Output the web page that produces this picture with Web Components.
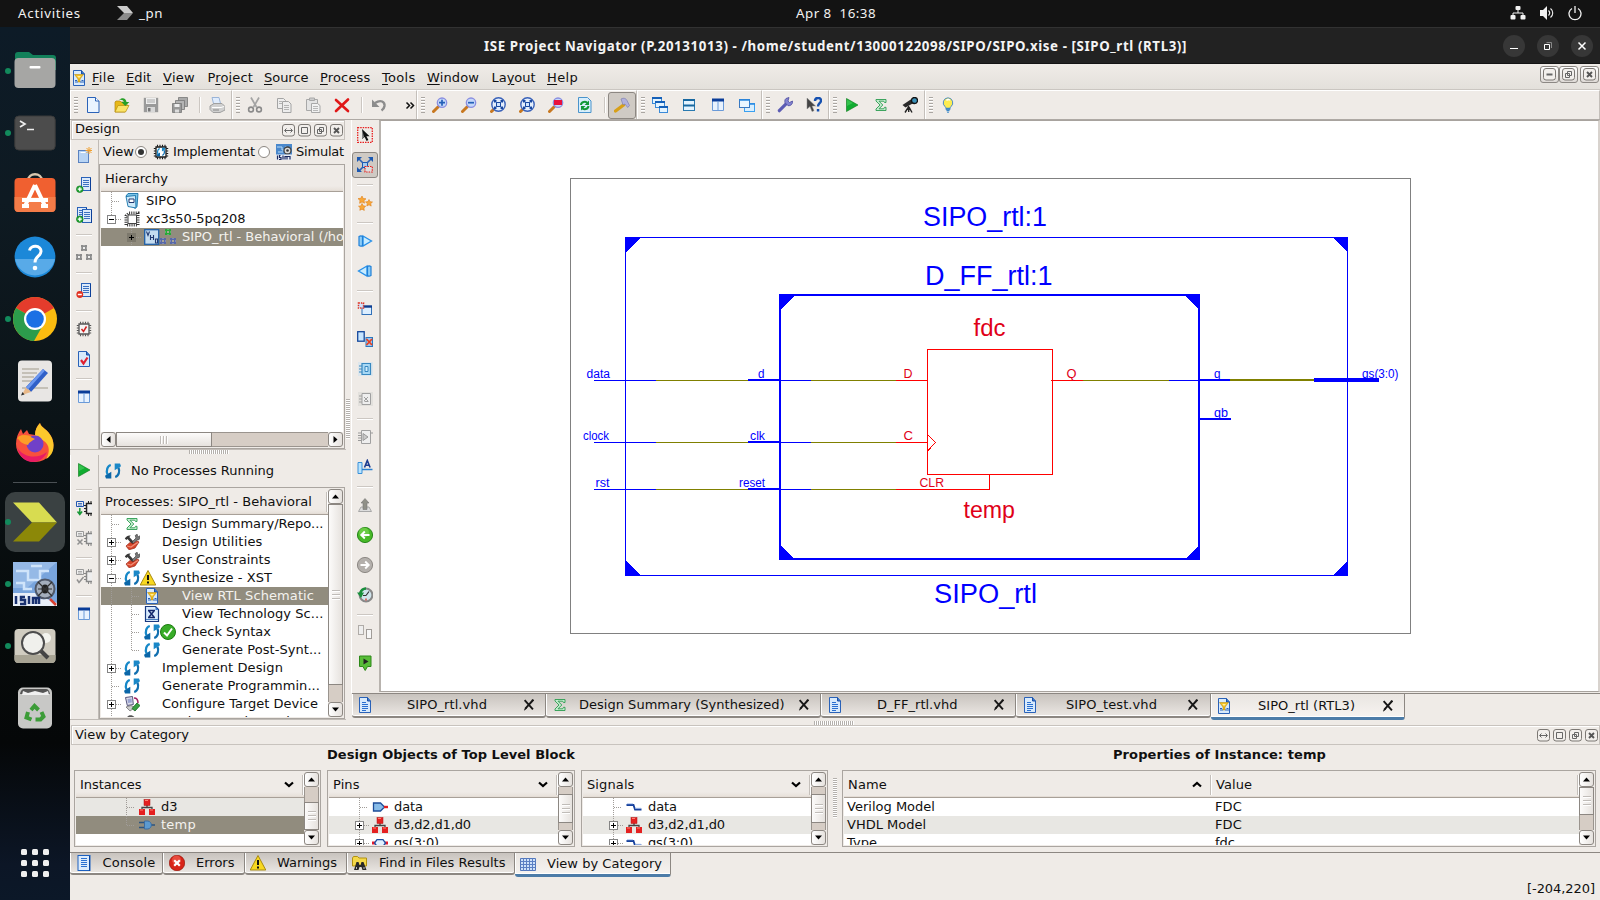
<!DOCTYPE html>
<html lang="en">
<head>
<meta charset="utf-8">
<title>ISE Project Navigator</title>
<style>
html,body{margin:0;padding:0;width:1600px;height:900px;overflow:hidden;background:#efebe7}
body{font:13px/18px "DejaVu Sans",sans-serif;color:#101010}
</style>
</head>
<body>
<ise-desktop></ise-desktop>
<script>
const fits = [];
function define(name, css, html) {
  customElements.define(name, class extends HTMLElement {
    connectedCallback() {
      if (this.shadowRoot) return;
      this.attachShadow({mode: 'open'});
      const body = typeof html === 'function' ? html(this) : html;
      this.shadowRoot.innerHTML = `<style>*{box-sizing:border-box}:host{display:block;box-sizing:border-box}${css}</style>${body}`;
    }
  });
}
const A = (el, n, d = '') => el.getAttribute(n) ?? d;

/* ---------- icon set, 16x16 ---------- */
const doc = (extra='') => `<path d="M2.500 .5h8l3 3.500v11.500h-11z" fill="#d8eafc" stroke="#2a62b8"/><path d="M10.500 .5v3.500h3" fill="#3b7ad0" stroke="#1b4fa5"/>${extra}`;
const lines = `<path d="M5 5.500h4M5 7.500h6M5 9.500h6M5 11.500h6M5 13.500h4" stroke="#2a6fd0"/>`;
const lens = (inner='') => `<path d="M1.500 14.500l4.500-4.500" stroke="#c87820" stroke-width="3" stroke-linecap="round"/><circle cx="10" cy="5.700" r="4.700" fill="#c4d8fa" stroke="#8a8ee0" stroke-width="1.300"/>${inner}`;
const lensX = `<path d="M1.500 14.500l3-3" stroke="#c87820" stroke-width="3" stroke-linecap="round"/><circle cx="8.500" cy="7.500" r="6.700" fill="#e4eefc" stroke="#3a62b8" stroke-width="1.400"/><path d="M5 4l7 7M12 4l-7 7" stroke="#1848a0" stroke-width="1.200"/><path d="M6.500 5.500h4v4h-4z" fill="#cfe4ff" stroke="#1848a0"/><path d="M4 3h3l-3 3zM13 3v3l-3-3zM4 12v-3l3 3zM13 12h-3l3-3z" fill="#1848a0"/>`;
const sync = `<path d="M5.800 2C2.400 2.800 .8 7.500 2.600 11.500" fill="none" stroke="#1788c8" stroke-width="2.300"/><path d="M0 12.800l6.300-4v6.700h-5.300z" fill="#0a66a8"/><path d="M10.200 14C13.600 13.200 15.200 8.500 13.400 4.500" fill="none" stroke="#1270b0" stroke-width="2.300"/><path d="M16 3.200l-6.300 4v-6.700h5.300z" fill="#1a88c8"/>`;
const chip = (c='#222', f='#f4f4f4', inner='') => `<path d="M3 3h10v10h-10z" fill="${f}" stroke="${c}" stroke-width="1.300"/><path d="M4.500 .8v2M7 .8v2M9.500 .8v2M12 .8v2M4.500 13.200v2M7 13.200v2M9.500 13.200v2M12 13.200v2M.8 4.500h2M.8 7h2M.8 9.500h2M.8 12h2M13.200 4.500h2M13.200 7h2M13.200 9.500h2M13.200 12h2" stroke="${c}" stroke-width="1.100"/>${inner}`;
const sm = (x,y,c,f) => `<rect x="${x+1}" y="${y+1}" width="4" height="4" fill="${f}" stroke="${c}" stroke-width="2"/><path d="M${x+.5} ${y+2.500}v1M${x+5.500} ${y+2.500}v1M${x+2.500} ${y+.5}h1M${x+2.500} ${y+5.500}h1" stroke="#fff" opacity=".45"/>`;
const hier = (a,b,f) => sm(5,0,a,f)+sm(0,9,b,f)+sm(10,9,b,f);
const tools = `<path d="M.8 4.500c1-2 3-3.500 6-3l-1.500 1.500 5.500 6-2 2-5.300-6-1.200 1z" fill="#383838"/><path d="M8 8l4-4-.8-2.500 2-1.300.3 2 2 .8.5-1.500.5 2.500-2 2-1.500 0-3.500 4z" fill="#787878" stroke="#333" stroke-width=".6"/><path d="M2 12l4-3.500 3 1.500 4-3 2 1-4 6-6 1.800z" fill="#d8452a" stroke="#9a2412" stroke-width=".7"/><path d="M3 12l4 1 3.500-2.500 3.500-2" fill="none" stroke="#f0907a" stroke-width="1.200"/>`;
const warn = `<path d="M8 .5l7.800 14.500h-15.600z" fill="#f8d820" stroke="#a88a10" stroke-linejoin="round"/><path d="M8 5v5M8 11.500v2" stroke="#111" stroke-width="2"/>`;
const greenTri = `<path d="M2.500 1.500l11.500 6.500-11.500 6.500z" fill="#10ac30" stroke="#087818" stroke-width=".6"/><path d="M3 2.500l6 3.500-6 3z" fill="#4cd060" opacity=".6"/>`;
const sigma = `<path d="M3 2.500h10v3h-1.500l-.8-1.300h-4.700l3.800 3.800-3.800 3.800h4.700l.8-1.500h1.500v3.200h-10v-1.500l4-4-4-4z" fill="#c5edd0" stroke="#2c9c50" stroke-width=".9"/>`;
const win = (x,y,w,h) => `<rect x="${x+.5}" y="${y+.5}" width="${w-1}" height="${h-1}" fill="#e4f4ff" stroke="#3a8ad8"/><path d="M${x} ${y+1}h${w}" stroke="#1560b8" stroke-width="2"/>`;
const columns = `<path d="M2.500 2.500h11v11h-11z" fill="#e8f2fe" stroke="#6a9ad8"/><path d="M2 3h12" stroke="#0a3c98" stroke-width="3"/><path d="M8 4v10" stroke="#6a9ad8"/>`;
const rtl = doc(`<path d="M3.500 4.500h9l-3.500 4.500v3h-2v-3z" fill="#f4c020" stroke="#b08000" stroke-width=".5"/><path d="M6 6h4l-2 2z" fill="#fff0a0"/><path d="M4 12h3M9 12h4M4 10.500h2M10.500 10.500h2" stroke="#2a62b8" stroke-width="1.200"/>`);
const plus = `<circle cx="3.800" cy="12.200" r="3.300" fill="#28a838" stroke="#0c7a1c" stroke-width=".7"/><path d="M1.800 12.200h4M3.800 10.200v4" stroke="#fff" stroke-width="1.300"/>`;
const bluedoc = (x=5,y=0) => `<rect x="${x+.5}" y="${y+.5}" width="9" height="13" fill="#dceafa" stroke="#2a62b8"/><path d="M${x+2} ${y+3.500}h6M${x+2} ${y+5.500}h6M${x+2} ${y+7.500}h6M${x+2} ${y+9.500}h6" stroke="#3a70c0"/><path d="M${x+9.500} ${y+1}v13" stroke="#0c3f98"/>`;
const redHier = `<path d="M8 5v4M3 11v-2.500h10v2.500" fill="none" stroke="#444" stroke-width="1.300"/><rect x="5" y=".5" width="6" height="6" fill="#e42020" stroke="#b01010" stroke-width=".5"/><rect x="0" y="10" width="6" height="6" fill="#e42020"/><rect x="10" y="10" width="6" height="6" fill="#e42020"/><path d="M6 1.500h3M1 11h3M11 11h3" stroke="#ff8070"/>`;
const chipproc = (c,b,x) => `<path d="M.5 1.500h7v5h-7z" fill="#eee" stroke="${b}"/><path d="M2 3.500h4M2 5h4" stroke="${b}" stroke-width=".8"/><path d="M16 3.500h-5.500v10h5.500" fill="#eee" stroke="${c}" stroke-width="1.500"/><path d="M8 5.500h2M8 8.500h2M8 11.500h2M12.500 1v2M15 1v2M12.500 14v2M15 14v2" stroke="${c}"/>${x}`;
const ICONS = {
  newdoc: `<path d="M2.500 .5h8l3.500 3.500v11.500h-11.500z" fill="#eaf4ff" stroke="#2a62b8"/><path d="M10.500 .5v3.500h3.500" fill="#fff" stroke="#2a62b8"/>`,
  open: `<path d="M1 5l1-1h4l1 1h4v3h3l-3 7h-10z" fill="#e8b818" stroke="#b08410" stroke-width=".7"/><path d="M1 15l3-6.500h11l-3.500 6.500z" fill="#fbe468" stroke="#b89010" stroke-width=".7"/><path d="M5 3c3-3 7-2 7.500 2h2.800l-4 4-4-4h2.600c-.6-2-2.500-2.600-4.900-2z" fill="#28a028"/>`,
  save: `<path d="M.8 .8h14.400v14.400h-14.400z" fill="#9a9a9a"/><path d="M3 1h10v6h-10z" fill="#eee"/><path d="M4 3h8M4 5h8" stroke="#aaa"/><path d="M4 10h8v5.200h-8z" fill="#d8d8d8"/><path d="M5 11h2.500v3.500h-2.500z" fill="#777"/>`,
  saveall: `<g stroke="#777" stroke-width=".8"><path d="M6.500 .5h9v9h-9z" fill="#aaa"/><path d="M3.500 3.500h9v9h-9z" fill="#b4b4b4"/><path d="M.5 6.500h9v9h-9z" fill="#999"/></g><path d="M2.500 7h5v3h-5z" fill="#eee"/><path d="M3 12.500h4v3h-4z" fill="#ddd"/>`,
  print: `<path d="M3 .5l7 0 2 8h-7z" fill="#e0ecfc" stroke="#9ab4d8"/><path d="M1 9l4-2.500h8l3 3v3.500l-5 2.500h-7l-3-3z" fill="#d0d0d0" stroke="#a0a0a0"/><path d="M3 10.500h9l3-1" stroke="#fff" fill="none"/><path d="M4 13h6" stroke="#888"/>`,
  cut: `<path d="M4 .5l5.500 9.500M12 .5l-5.500 9.500" stroke="#a4a4a4" stroke-width="1.700"/><circle cx="4" cy="12.500" r="2.400" fill="none" stroke="#8a8a8a" stroke-width="1.600"/><circle cx="12" cy="12.500" r="2.400" fill="none" stroke="#8a8a8a" stroke-width="1.600"/>`,
  copy: `<g fill="#ededed" stroke="#a4a4a4"><path d="M1.500 1.500h6l2 2v8h-8z"/><path d="M6.500 4.500h6l2.500 2.500v8.500h-8.500z"/></g><path d="M3 4.500h3M3 6.500h3M8 8.500h5M8 10.500h5M8 12.500h5" stroke="#b4b4b4"/>`,
  paste: `<g fill="#e4e4e4" stroke="#a8a8a8"><path d="M1.500 2.500h11v11h-11z"/><path d="M4.500 1h5v2.500h-5z" fill="#ccc"/><path d="M6.500 6.500h6l2.500 2v7h-8.500z" fill="#f2f2f2"/></g><path d="M8 9.500h5M8 11.500h5M8 13.500h5" stroke="#b8b8b8"/>`,
  del: `<path d="M2 3l12 11M14 2.500l-12 11.500" stroke="#e01818" stroke-width="2.600" stroke-linecap="round"/>`,
  undo: `<path d="M4 6c6-4 10-1 9.500 3-.3 2-1.500 3.500-3 4.500" fill="none" stroke="#8c8c8c" stroke-width="2.400"/><path d="M1 2.500v7.500h7.500z" fill="#8c8c8c"/>`,
  more: `<path d="M5.500 5.500l3 3-3 3M9.500 5.500l3 3-3 3" fill="none" stroke="#111" stroke-width="1.500"/>`,
  zin: lens('<path d="M7 5.700h6M10 2.700v6" stroke="#2460b8" stroke-width="1.700"/>'),
  zout: lens('<path d="M7 5.700h6" stroke="#2460b8" stroke-width="1.700"/>'),
  zfit: lensX, zsel: lensX,
  zbox: lens('<rect x="6" y="3" width="8" height="5" fill="#e8103c"/>'),
  refresh: `<path d="M1.500 .5h9l3.500 3.500v11.500h-12.500z" fill="#d8eefc" stroke="#4a94cc"/><path d="M4 8c0-3.500 5-4 6.500-2M11.500 9c-.5 3.500-5 4-6.500 2" fill="none" stroke="#109838" stroke-width="2"/><path d="M12 3.500v4.500h-4.500zM4 13.500v-4.500h4.500z" fill="#109838"/>`,
  hammer: `<path d="M1.500 14l8-6" stroke="#d8a018" stroke-width="3.400" stroke-linecap="round"/><path d="M7 2c3-1.500 5-.5 6 1.500l2.500 5-1.800 2-2.700-3.500-2 .8z" fill="#b0b0dc" stroke="#8080b0" stroke-width=".7"/>`,
  cascade: win(0,0,10,7)+win(3,4,10,7)+win(7,9,9,7),
  tileh: `<rect x="2.500" y="2.500" width="11" height="11" fill="#e4f4ff" stroke="#2a7ab0"/><path d="M2 3h12M2 8.500h12" stroke="#1868a0" stroke-width="1.800"/>`,
  tilev: columns,
  winback: `<rect x="5.500" y="6.500" width="10" height="8" fill="#d8eefe" stroke="#3aa0f0"/><rect x=".5" y="2.500" width="10" height="8" fill="#eaf6ff" stroke="#3a78c0"/><path d="M0 3h11M10 7h6" stroke="#2888e0" stroke-width="1.500"/>`,
  wrench: `<path d="M2.300 13.700l7-7" stroke="#5c5cb4" stroke-width="3.200" stroke-linecap="round"/><path d="M9 1.500l3-1-1 3.500 1.500 1.500 3-1.500c.4 3.500-2 5-4.500 4.700l-3-3c-.5-2 0-3.500 1-4.200z" fill="#8484d0" stroke="#4c4ca0" stroke-width=".8"/>`,
  help: `<path d="M1 1v11l3-2.500 2 5 2-.8-2-4.700h3.500z" fill="#444" stroke="#888" stroke-width=".5"/><path d="M9 4c0-4 6-4 6-.5 0 2.800-3 2.700-3 6" fill="none" stroke="#1550b0" stroke-width="2.400"/><path d="M10.800 12h2.500v2.500h-2.500z" fill="#1550b0"/>`,
  play: greenTri, sigma,
  scope: `<path d="M.5 8l3 2.500 8-4.500-2-4z" fill="#2a2a2a"/><circle cx="12.500" cy="3.500" r="3" fill="#3a90b8" stroke="#111" stroke-width="1.300"/><path d="M6.500 9v3M6.500 10l-3.500 5.500M7 10l3 5.500M6.700 11v4" stroke="#222" stroke-width="1.400"/>`,
  bulb: `<path d="M8 .8a5 5 0 0 0-3 8.800c1 1 1 2 1 3h4c0-1 0-2 1-3a5 5 0 0 0-3-8.800z" fill="#fcec50" stroke="#4a8cc8"/><path d="M6.500 3.500c1-1.500 3-1 3 0" stroke="#fff" fill="none" stroke-width="1.500"/><path d="M6 11.500h4M6.500 13.500h3M7.300 15.300h1.400" stroke="#3a88c8" stroke-width="1.300"/>`,
  rtl, doc: doc(lines),
  cursor: `<rect x=".7" y=".7" width="14.600" height="14.600" fill="none" stroke="#e82020" stroke-width="1.300" stroke-dasharray="1.500 1"/><path d="M5 2v10l2.600-2 2 4 1.800-1-2-3.800h3.200z" fill="#111"/><path d="M5 2v10l2-2z" fill="#888"/>`,
  net: `<path d="M2 2l12 12M14 2l-12 12" stroke="#2a62b8" stroke-width="1.600"/><path d="M0 0h5l-5 5zM16 0v5l-5-5zM0 15v-5l5 5z" fill="#1c58b0"/><path d="M5.500 5.500h5v5h-5z" fill="#a4ccf0" stroke="#1c58b0"/><rect x="8" y="9.500" width="7.300" height="5.500" fill="#ddd" stroke="#e82020" stroke-width="1.200" stroke-dasharray="1.500 1"/>`,
  stars: `<path d="M5 1l1.200 2.500 2.800.3-2 1.800.5 2.600-2.500-1.200-2.400 1.300.4-2.800-2-1.900 2.800-.3zM12 4.500l1 2.200 2.500.3-1.800 1.600.5 2.500-2.200-1.300-2.200 1.200.5-2.400-1.800-1.700 2.500-.3zM5 8.500l1.200 2.300 2.500.4-1.800 1.700.4 2.500-2.300-1.200-2.200 1.100.4-2.500-1.700-1.600 2.400-.3z" fill="#f8a838" stroke="#e08018" stroke-width=".6"/>`,
  tright: `<path d="M6 3l8.500 5-8.500 5z" fill="#c8ecff" stroke="#2890e8" stroke-width="1.300"/><path d="M2 3.500c1.500-1 2.500-1 3.500 0v9c-1 1-2 1-3.500 0z" fill="#8ccdf8" stroke="#2080d8" stroke-width="1.200"/>`,
  tleft: `<path d="M10 3l-8.500 5 8.500 5z" fill="#c8ecff" stroke="#2890e8" stroke-width="1.300"/><path d="M14 3.500c-1.500-1-2.500-1-3.500 0v9c1 1 2 1 3.500 0z" fill="#8ccdf8" stroke="#2080d8" stroke-width="1.200"/>`,
  popwin: `<rect x="5" y="5.500" width="9.500" height="8" fill="#dceeff" stroke="#3070b8"/><path d="M4.500 5.500h10.500" stroke="#0c3c90" stroke-width="2.400"/><rect x="1.500" y="2" width="5" height="5" fill="#cfe4ff" stroke="#e03020" stroke-width="1.500" stroke-dasharray="1.400 1"/>`,
  delbox: `<rect x=".7" y=".7" width="6.500" height="9.500" fill="#c8e6ff" stroke="#14489c" stroke-width="1.300"/><rect x="9" y="6.500" width="6.500" height="9" fill="#a0c8f0" stroke="#2a78c0"/><path d="M9.500 8l5.500 6M15 8l-5.500 6" stroke="#e84020" stroke-width="1.800"/>`,
  chipb: `<rect x="1" y="1" width="15" height="14" fill="#dde6ec"/><path d="M5 2.500h8.500v11h-8.500z" fill="#a8d8f4" stroke="#3888c0" stroke-width="1.200"/><path d="M8 5.500h3v5h-3z" fill="#d0ecfc" stroke="#3888c0"/><path d="M2 5h3M2 8h3M2 11h3" stroke="#3888c0"/>`,
  chipg: `<rect x="1" y="1" width="15" height="14" fill="#e2e0dc"/><path d="M5 2.500h8.500v11h-8.500z" fill="#eee" stroke="#a0a0a0"/><path d="M7 6l4 4M11 6l-4 4M7.500 10.500h4" stroke="#a0a0a0"/><path d="M2 5h3M2 8h3M2 11h3" stroke="#a0a0a0"/>`,
  gateg: `<path d="M4.500 1.500h9v13h-9z" fill="#eee" stroke="#a0a0a0"/><path d="M6 4.500l5 3.500-5 3.500z" fill="#c8c8c8" stroke="#999"/><path d="M1 4h3.500M1 6.500h3.500M1 9h3.500M1 11.500h3.500M13.500 4h2.500" stroke="#999"/>`,
  label: `<path d="M1 3.500h4v11h-4z" fill="#b8e4ff" stroke="#3a90d8"/><path d="M5 10.500h10.500" stroke="#2a80d0" stroke-width="1.500"/><path d="M7.500 8.500l2.800-7 2.800 7M8.500 6.200h3.600" fill="none" stroke="#1c3c90" stroke-width="1.600"/>`,
  up: `<path d="M4 10l-2.500 4.500h13l-2.500-4.500z" fill="#ddd" stroke="#a8a8a8"/><path d="M8 1.500l4 4.500h-2v6.500h-4v-6.500h-2z" fill="#909088" stroke="#777" stroke-width=".6"/>`,
  back: `<circle cx="8" cy="8" r="7.600" fill="#48b828" stroke="#1c8010" stroke-width=".9"/><circle cx="7" cy="5.500" r="5" fill="#8ce060" opacity=".5"/><path d="M12.500 8h-8M7.800 4.500l-3.500 3.500 3.500 3.500" fill="none" stroke="#fff" stroke-width="1.900"/>`,
  fwd: `<circle cx="8" cy="8" r="7.600" fill="#b4b0ac" stroke="#84807c" stroke-width=".9"/><path d="M3.500 8h8M8.200 4.500l3.500 3.500-3.500 3.500" fill="none" stroke="#fff" stroke-width="1.900"/>`,
  clock: `<circle cx="9" cy="8" r="6.400" fill="#d0e4ec" stroke="#888" stroke-width="2"/><path d="M9 8.500l3-4M9 8.500h-3" stroke="#333" stroke-width="1.200"/><path d="M0 5.500l7 0-3 5.500z" fill="#18903c"/><path d="M3.500 7c0-4 3-5.500 5.500-5.500" fill="none" stroke="#18903c" stroke-width="2.600"/><path d="M9 11.500v2" stroke="#e04030" stroke-width="1.400"/>`,
  cols: `<rect x="1.500" y=".5" width="5" height="9" fill="#eee" stroke="#b0aca8"/><rect x="9.500" y="4.500" width="5" height="9" fill="#f6f6f6" stroke="#a09c98"/>`,
  marker: `<path d="M2.500 1h11.500v10.500h-3.500l-2.300 4-2.300-4h-3.400z" fill="#58bc38" stroke="#2c8818"/><path d="M6.500 3.500l5 3-5 3z" fill="#222"/>`,
  newsrc: `<rect x="2.500" y="3.500" width="10" height="12" fill="#b8d4f4" stroke="#5a82c0"/><path d="M4.500 5.500h5" stroke="#fff"/><path d="M13 0v7M9.500 3.500h6.500M10.500 1l5 5M15.500 1l-5 5" stroke="#f0a030" stroke-width="1"/>`,
  addsrc: bluedoc(5,0)+plus, addcopy: bluedoc(1,0)+bluedoc(6,2)+plus,
  remsrc: bluedoc(5,0)+`<circle cx="3.800" cy="11.500" r="3.400" fill="#e03020"/><path d="M1.800 11.500h4" stroke="#fff" stroke-width="1.500"/>`,
  hierg: hier('#8c8c8c','#8c8c8c','#eee'), hierc: hier('#28a838','#5868a8','#a8a498'),
  chipchk: chip('#555','#f4f4f4','<path d="M5.500 8l2 2.500 3-5" stroke="#d02020" stroke-width="1.500" fill="none"/>'),
  docchk: doc('<path d="M5 9l2.500 3.500 4-6" stroke="#e02030" stroke-width="2.200" fill="none"/>'),
  columns,
  chipsync: chip('#181818','#fff',`<g transform="translate(3.500 3.500) scale(.56)">${sync}</g>`),
  isim: `<rect width="16" height="16" fill="#4a88cc"/><path d="M1 3h5v3h4v-4M2 8h5" stroke="#b8dcf8" fill="none"/><circle cx="11.500" cy="6.500" r="3.500" fill="#ddd" stroke="#444" stroke-width="1.300"/><circle cx="11.500" cy="6.500" r="1.300" fill="#333"/><path d="M0 10.500h16v5.500h-16z" fill="#e8ecf4"/><path d="M1.500 11.500v4M4.500 11.500h-1v2h1.500v2h-2M7 11.500v4M9 15.500v-3h2v3M11 12.500h3v3" stroke="#182860" stroke-width="1.200" fill="none"/>`,
  proj: `<path d="M2 3l2-2.500h10l-1 13-2 2z" fill="#7cc4e8" stroke="#1470a8" stroke-width=".9"/><path d="M2 3.500l9.500-1 .5 12.500-8-1.500z" fill="#cdeafa" stroke="#1470a8" stroke-width=".9"/><path d="M5 6h5v3.500h-5z" fill="#fff" stroke="#203870"/>`,
  chip: `<path d="M3.500 3.500l1.500-1.500h9v12h-12v-9z" fill="#fff" stroke="#333" stroke-width="3" stroke-dasharray="1 1.200"/><path d="M4 4h8.500v8.500h-8.500z" fill="#fff" stroke="#444"/>`,
  vhd: `<rect x=".7" y=".7" width="14" height="14.600" fill="#c4dcf0" stroke="#2060a8" stroke-width="1.300"/><path d="M2.500 2.500l1.500 4 1.500-4M6.500 6v5M9.500 6v5M6.500 8.500h3M11.500 10v4h2v-4z" fill="none" stroke="#203870" stroke-width="1.100"/>`,
  sync, tools, warn,
  tech: `<path d="M1.500 .5h10l3 3v12h-13z" fill="#d8eafc" stroke="#1a3a80" stroke-width="1.200"/><path d="M11.500 .5v3.500h3" fill="#3b7ad0"/><path d="M4 4.500h7M4 11.500h7M5 5l5 6M10 5l-5 6" stroke="#14286c" stroke-width="1.500"/><path d="M2 13.500h12" stroke="#4a80c0"/>`,
  ok: `<circle cx="8" cy="8" r="7.500" fill="#38ac28" stroke="#1c7c10"/><path d="M4 8.500l3 3 5-7" fill="none" stroke="#fff" stroke-width="2"/>`,
  device: `<path d="M1.500 1.500l7-1 .8 8-6 1z" fill="#dcdcec" stroke="#55557c"/><path d="M3.500 3l4-.5.4 4-4 .5z" fill="#9aa4d0"/><path d="M10 2c3 0 4 2 4 5" stroke="#a02060" fill="none" stroke-width="1.500"/><path d="M2 11l5-1.500 4 2-5 3.500z" fill="#ccc" stroke="#666" stroke-width=".7"/><path d="M8 12.500l5-5.500 3 2.500-5 5.500z" fill="#38a040" stroke="#146420" stroke-width=".8"/>`,
  analyze: `<path d="M3 4c0-3 6-4 8 0v8h-8z" fill="#555"/>`,
  run1: chipproc('#222','#2458b0','<path d="M3.800 8v6M1.500 11.500l2.300 3 2.300-3" stroke="#189838" stroke-width="1.500" fill="none"/>'),
  run2: chipproc('#888','#999','<path d="M1.500 9.500l5 5M6.500 9.500l-5 5" stroke="#909090" stroke-width="1.500"/>'),
  run3: chipproc('#888','#999','<path d="M1 11.500l2 3 4.500-5.500" stroke="#909090" stroke-width="1.500" fill="none"/>'),
  redhier: redHier,
  gate: `<path d="M0 5.500h6M0 10.500h6M12 8h4" stroke="#2c5480" stroke-width="1.500"/><path d="M5.500 4h3.500c4.500 1 4.500 7 0 8h-3.500z" fill="#5c9ad0" stroke="#3c6ca0"/>`,
  pin: `<path d="M1.500 4h7l4 4-4 4h-7z" fill="#88bce8" stroke="#1c4c98" stroke-width="1.300"/><path d="M12 8h4" stroke="#e02020" stroke-width="2.400"/>`,
  bus: `<path d="M0 8h16" stroke="#e81828" stroke-width="3"/><path d="M5 4.700h6l2.500 3.300-2.500 3.300h-6l-2.500-3.300z" fill="#e0f0ff" stroke="#1c4ca0" stroke-width="1.300"/>`,
  sig: `<path d="M.5 6h7l1.500 4.500h6.500" fill="none" stroke="#16409c" stroke-width="1.800"/><path d="M1 4.800h6M9 9.300h6" stroke="#90b0e8" stroke-width=".8"/>`,
  console: `<rect x="2" y=".5" width="12" height="15" fill="#dcecfc" stroke="#1c60c0"/><path d="M13.500 1v15" stroke="#0c48a0"/><path d="M5 3.500h6M5 5.500h6M5 7.500h6M5 9.500h6M5 11.500h6" stroke="#2a70d0"/>`,
  err: `<circle cx="8" cy="8" r="7.700" fill="#d82418" stroke="#981408" stroke-width=".7"/><circle cx="7.500" cy="5" r="4.500" fill="#f87060" opacity=".5"/><path d="M5.200 5.200l5.600 5.600M10.800 5.200l-5.600 5.600" stroke="#fff" stroke-width="2.200"/>`,
  find: `<path d="M.5 3l1-1.500h4l1.500 1.500h7.500v8h-14z" fill="#f4d848" stroke="#b09010"/><path d="M2 15l2.500-8h2l1 3h1l1-3h2l3 8h-4l-1-3h-2l-1 3z" fill="#282828"/><path d="M4.500 12v2M12 12v2" stroke="#bbb"/>`,
  grid: `<path d="M.5 2.500h15v12h-15z" fill="#cfe2fa" stroke="#5478bc"/><path d="M.5 5.500h15M.5 8.500h15M.5 11.500h15M3.500 2.500v12M6.500 2.500v12M9.500 2.500v12M12.500 2.500v12" stroke="#5c80c4"/>`,
  close: `<path d="M3 2.500l9.500 10.500M13 2l-9.500 10.500" stroke="#161616" stroke-width="2.200"/><path d="M2.500 14l3-3M11 2.500h2.500" stroke="#161616" stroke-width="1.200"/>`,
};
define('ise-icon', `:host{width:16px;height:16px;flex:none}svg{display:block;width:100%;height:100%}`,
  el => `<svg viewBox="0 0 16 16">${ICONS[A(el,'n')] || ''}</svg>`);

/* text whose tracking is tuned so the run takes a given width */
customElements.define('fit-text', class extends HTMLElement {
  connectedCallback() {
    if (!this.shadowRoot) {
      this.attachShadow({mode:'open'}).innerHTML = `<style>:host{display:block;white-space:pre;flex:none}span{display:inline-block}</style><span><slot></slot></span>`;
      fits.push(this);
    }
  }
  fit() {
    const w = +this.getAttribute('w'), s = this.shadowRoot.querySelector('span');
    if (!w) return;
    const n = this.textContent.length;
    s.style.letterSpacing = ((w + 1 - s.getBoundingClientRect().width) / n).toFixed(3) + 'px';
  }
});
const T = (t, w) => `<fit-text w="${w}">${t}</fit-text>`;

/* ---------- GNOME shell ---------- */
define('shell-bar', `:host{height:27px;background:#131313;color:#f2f2f2;font:14px/27px "Noto Sans",sans-serif;position:relative}
 .row{display:grid;grid-template-columns:796px 80px 1fr;height:27px}.l{display:flex;padding-left:18px}.l svg{margin:5px 6px 0 36px}
 .r{display:flex;justify-content:flex-end;padding-right:18px;gap:13px;align-items:center;padding-bottom:1px}fit-text{font-size:13.300px}`,
 `<div class="row"><div class="l">${T('Activities',62)}<svg width="16" height="16"><path d="M0 1h10l6 7h-9z" fill="#ccc"/><path d="M7 8h9l-6 7h-10z" fill="#8c8c8c"/></svg>${T('_pn',23)}</div>
 ${T('Apr 8  16:38',79)}
 <div class="r"><svg width="16" height="16" fill="#f2f2f2"><rect x="5.500" y="1" width="5" height="4" rx="1"/><rect x=".5" y="10" width="5" height="4.500" rx="1"/><rect x="10.500" y="10" width="5" height="4.500" rx="1"/><path d="M8 5v3M3 10v-2h10v2" fill="none" stroke="#f2f2f2"/></svg>
 <svg width="16" height="16"><path d="M1 5h3l4-4v14l-4-4h-3z" fill="#f2f2f2"/><path d="M9.500 5.500c1.500 1.500 1.500 3.500 0 5M11.500 3.500c3 2.500 3 6.500 0 9" fill="none" stroke="#f2f2f2" stroke-width="1.100"/></svg>
 <svg width="14" height="16"><path d="M4 3.500a6 6 0 1 0 6 0M7 1v7" fill="none" stroke="#f2f2f2" stroke-width="1.300"/></svg></div></div>`);

const DOCK = {
 files:`<path d="M1 5q0-3 3-3h11l4 3h20q3 0 3 3v12h-41z" fill="#12805a"/><rect x=".5" y="8" width="41" height="30" rx="4" fill="#a6a6a4"/><rect x="15.500" y="16" width="11" height="2.500" rx="1" fill="#fff"/>`,
 term:`<rect x=".8" y="4" width="40.400" height="34" rx="4" fill="#4c4c4c" stroke="#3a3a3a"/><path d="M6 9l5 3-5 3" fill="none" stroke="#eee" stroke-width="1.700"/><path d="M13 17.500h7" stroke="#eee" stroke-width="1.500"/>`,
 soft:`<path d="M14 7c0-9 14-9 14 0" fill="none" stroke="#d8c8b0" stroke-width="2.400"/><rect x=".5" y="4" width="41" height="34" rx="4" fill="#f06030"/><path d="M.5 23h41v11q0 4-4 4h-33q-4 0-4-4z" fill="#f47c48"/><path d="M21 11L11 32M21 11l10 21M8 26h26M8 32h7M27 32h7" stroke="#fff" stroke-width="4" fill="none"/>`,
 help:`<circle cx="21" cy="21" r="20.400" fill="#1c88d8"/><path d="M1 23a20.400 20.400 0 0 0 40 0z" fill="#58aae8"/><path d="M15.500 14.500c1-6 12-5.500 11.500 1-.4 5-6 4.500-6 11" fill="none" stroke="#fff" stroke-width="3"/><circle cx="21" cy="32" r="2.300" fill="#fff"/>`,
 chrome:`<circle cx="21" cy="21" r="22" fill="#fbbc10"/><path d="M21 21L2 10a22 22 0 0 1 38 0z" fill="#e43c2c"/><path d="M2 10a22 22 0 0 0 18 33l9-16-8-6z" fill="#2c9c4c"/><circle cx="21" cy="21" r="11" fill="#fff"/><circle cx="21" cy="21" r="8.800" fill="#1c70e4"/>`,
 edit:`<rect x="4" y=".5" width="34" height="41" rx="4" fill="#e8e6e4"/><path d="M8 9h17M8 13h15M8 17h12M8 21h10M8 28h26" stroke="#b8b4a8" stroke-width="1.300"/><path d="M29 9l5 4-17 19-5-5z" fill="#3060c8"/><path d="M12 27l5 5-9 3z" fill="#e8b888"/><path d="M8.500 32l2 2.500-3.500 1z" fill="#333"/><path d="M29 9l2 1.500-17 19-2-2z" fill="#6c98f0"/>`,
 fox:`<path d="M21 40c-11 0-19-8-19-18 0-6 2-11 5-15l2 5 4-4 2 4 6 1c0-5 2-9 5-12 1 5 8 6 12 15 5 12-4 24-17 24z" fill="#f8503c"/><path d="M26 1c1 5 8 6 12 15 4 10 0 18-6 21 4-6 4-14-2-18-4-3-8-4-9-6 0-5 2-9 5-12z" fill="#fcc82c"/><path d="M3 17c3-6 12-4 18-2l6 2-10 3z" fill="#f89820"/><circle cx="21" cy="22" r="8.500" fill="#7040c8"/><path d="M4 15c6-4 12 0 17 2-3 2-6 3-7 6-5-1-9-3-10-8z" fill="#fc9c28"/><path d="M3 25c5 10 20 13 30 5-3 7-9 10-14 10-8 0-14-6-16-15z" fill="#e81c64"/>`,
 ise:`<path d="M-1 1.500h26l18 20h-25z" fill="#d8dc50"/><path d="M18 21.500h25l-18 19h-26z" fill="#8c8808"/>`,
 isim:`<rect x="-1" y="-1" width="44" height="44" fill="#78a4dc"/><path d="M-1-1h44l-30 26h-14z" fill="#a8c8ec" opacity=".6"/><path d="M2 8h12v9h12v-9h9M2 20h8v6h8M17 3h11" fill="none" stroke="#d0e4fa" stroke-width="2.500"/><circle cx="31" cy="26" r="9.500" fill="#a4aebc" stroke="#505868" stroke-width="2"/><ellipse cx="31" cy="26" rx="3.500" ry="4.500" fill="#222"/><path d="M24 19l14 14M38 19l-14 14M24 26h14" stroke="#333" stroke-width="1.200"/><path d="M-1 30h22q3 8 12 6l10 4v3h-44z" fill="#e8eef8"/><path d="M2 33v8M11 34h-4v3h4v4h-5M15 33v8M19 41v-6h3v6M22 35h3v6" stroke="#183070" stroke-width="2.500" fill="none"/><path d="M36 36l6 6" stroke="#d84030" stroke-width="2.500"/>`,
 mag:`<rect x=".5" y="4" width="41" height="34" rx="4" fill="#d0ccc0"/><path d="M.5 30h41v4q0 4-4 4h-33q-4 0-4-4z" fill="#a8a494"/><circle cx="32" cy="13" r="5" fill="#f4f4ee"/><path d="M26 25l8 8" stroke="#444" stroke-width="4"/><circle cx="19" cy="18" r="11" fill="#f0f0ec" stroke="#4c4c4c" stroke-width="2"/>`,
 trash:`<rect x="4" y=".5" width="34" height="41" rx="5" fill="#c8c8c6"/><path d="M6 7q1-5 4-5h22q3 0 4 5z" fill="#555"/><path d="M8 8l1-4 5 2 7-2 8 2 5-2 1 4z" fill="#f0f0f0"/><g fill="none" stroke="#3c9c38" stroke-width="4"><path d="M17 23l3.500-4 4 4M14 25l-1.500 5.500 5 2M27.500 25l2 4.500-3 3h-5"/></g>`
};
define('dock-item', `:host{height:62px;position:relative;display:flex;align-items:center;justify-content:center}svg{width:42px;height:42px;overflow:visible}:host(:not([on])) svg{margin-top:4px}
 i{position:absolute;left:5px;top:28px;width:6px;height:6px;border-radius:50%;background:#128a5c}:host([on]) .b{background:#3a4142;border-radius:10px;width:60px;height:60px;display:flex;align-items:center;justify-content:center}`,
 el=>`${el.hasAttribute('run')?'<i></i>':''}<div class="b"><svg viewBox="0 0 42 42">${DOCK[A(el,'n')]}</svg></div>`);
define('app-dock', `:host{width:70px;background:linear-gradient(#0d1b27 0,#0e1a22 20%,#0b1317 45%,#060a0a 70%,#050708 82%,#0c1626 96%,#0c1828);padding-top:13px;overflow:hidden;display:flex;flex-direction:column}
 hr{width:44px;height:1px;border:0;background:#4a5054;margin:8px auto;flex:none}.g{margin:110px auto 0;display:grid;grid-template-columns:repeat(3,6px);gap:5px}.g b{width:6px;height:6px;border-radius:1.500px;background:#f0f0f0}dock-item{flex:none}`,
 `<dock-item n="files" run></dock-item><dock-item n="term" run></dock-item><dock-item n="soft"></dock-item><dock-item n="help"></dock-item><dock-item n="chrome" run></dock-item><dock-item n="edit"></dock-item><dock-item n="fox"></dock-item><hr><dock-item n="ise" on run></dock-item><dock-item n="isim" run></dock-item><dock-item n="mag" run></dock-item><dock-item n="trash"></dock-item><div class="g">${'<b></b>'.repeat(9)}</div>`);

define('title-bar', `:host{height:37px;background:#222;border-top:1px solid #323232;border-bottom:1px solid #141414;color:#f4f4f4;font:bold 13.300px/35px "Noto Sans",sans-serif;display:flex;padding-left:414px;padding-right:7px;align-items:center}
 .s{flex:1}svg{margin-left:12px}fit-text{padding-top:2px;line-height:33px}`,
 `${T('ISE Project Navigator (P.20131013) - /home/student/13000122098/SIPO/SIPO.xise - [SIPO_rtl (RTL3)]',702)}<div class="s"></div>
 ${['<path d="M7 13.500h8" stroke="#fff"/>','<path d="M7.500 9.500h5v5h-5z" fill="none" stroke="#fff"/><path d="M9.500 7.500h5v5.500" fill="none" stroke="#888"/>','<path d="M7.500 7.500l7 7M14.500 7.500l-7 7" stroke="#fff" stroke-width="1.500"/>'].map(p=>`<svg width="22" height="22"><circle cx="11" cy="11" r="11" fill="#373737"/>${p}</svg>`).join('')}`);

const glyphs = [`<path d="M3 6.500h7M4.500 4.500l-2 2 2 2M8.500 4.500l2 2-2 2" stroke="#666" fill="none"/>`,`<path d="M3.500 3.500h6v6h-6z" stroke="#666" fill="none"/>`,`<path d="M5.500 3.500h4v4h-4zM3.500 5.500h4v4h-4z" stroke="#666" fill="none"/>`,`<path d="M4 4l5 5M9 4l-5 5" stroke="#555" stroke-width="1.900"/>`,`<path d="M3.500 6.500h6" stroke="#666" stroke-width="2"/>`];
const tiny = i => `<svg width="13" height="13"><rect x=".5" y=".5" width="12" height="11.500" rx="2.500" fill="#f2efec" stroke="#7c7874"/>${glyphs[i]}</svg>`;
define('dock-title', `:host{height:20px;margin:0 0 0 1px;border:1px solid #c8c3be;box-shadow:inset 1px 1px #fff;display:flex;padding-left:3px;align-items:center;line-height:17px}
 fit-text{padding-bottom:1px}:host([up]) fit-text{padding-bottom:3px}.s{flex:1}svg{margin-right:3px}svg:last-child{margin-right:1px}`,
 el=>`${T(A(el,'t'),A(el,'w'))}<div class="s"></div>${[0,1,2,3].map(tiny).join('')}`);

/* ---------- menus and toolbars ---------- */
define('menu-bar', `:host{height:26px;background:linear-gradient(#f0ece8,#e3e0db);border-bottom:1px solid #cac6c1;display:flex;align-items:center;padding-left:1px;padding-right:1px}
 .m{line-height:22px;padding-top:3px}.s{flex:1}ise-icon{margin-right:5px;margin-top:3px}u{text-underline-offset:2px}
 .b{width:19px;height:17px;border:1px solid #8c8884;border-radius:3px;background:linear-gradient(#fff,#dedad6);display:flex;align-items:center;justify-content:center;margin-bottom:5px}.b+.b+.b{margin-left:2px}`,
 `<ise-icon n="rtl"></ise-icon>${[['<u>F</u>ile',22,34],['<u>E</u>dit',24.5,37],['<u>V</u>iew',31,44.5],['P<u>r</u>oject',44.5,56.5],['<u>S</u>ource',43.500,56],['<u>P</u>rocess',49.500,62],['<u>T</u>ools',32.500,45],['<u>W</u>indow',51,64.500],['La<u>y</u>out',43,55.500],['<u>H</u>elp',30,40]].map(m=>`<div class="m" style="width:${m[2]}px">${T(m[0],m[1])}</div>`).join('')}<div class="s"></div>${[4,2,3].map(i=>`<div class="b">${tiny(i)}</div>`).join('')}`);

define('tool-group', `:host{height:29px;display:flex;align-items:center;border-right:1px solid #c4bfba;border-left:1px solid #fff;border-top:1px solid #fff;padding-left:3px;flex:none}
 .h{width:4px;height:16px;flex:none;background:repeating-linear-gradient(#aaa6a2 0 1px,#fff 1px 2px,transparent 2px 3px);margin-right:1px}
 .b{width:28px;height:27px;margin-right:1px;display:flex;align-items:center;justify-content:center;flex:none}.on{background:#cfcac4;border:1px solid #8c8782;border-radius:3px}.q{width:25px;margin-left:2px}
 .p{width:8px;height:16px;flex:none;background:linear-gradient(#ccc7c2,#ccc7c2) 4px 0/1px 100% no-repeat,linear-gradient(#fff,#fff) 5px 0/1px 100% no-repeat}`,
 el=>`<div class="h"></div>${A(el,'i').split(' ').map(n=>n==='|'?'<div class="p"></div>':`<div class="b ${n==='hammer'?'on':n==='more'?'q':''}"><ise-icon n="${n}"></ise-icon></div>`).join('')}`);
define('tool-column', `:host{display:flex;flex-direction:column;align-items:center;border-left:1px solid #fff;padding-right:1px}
 .b{width:26px;height:30px;flex:none;display:flex;align-items:center;justify-content:center}.on{height:26px;margin:2px 0;background:#cfcac4;border:1px solid #8c8782;border-radius:3px}
 .p{height:8px;width:16px;flex:none;background:linear-gradient(#ccc7c2,#ccc7c2) 0 4px/100% 1px no-repeat,linear-gradient(#fff,#fff) 0 5px/100% 1px no-repeat}`,
 el=>A(el,'i').split(' ').map(n=>n==='|'?'<div class="p"></div>':`<div class="b ${n==='net'?'on':''}"><ise-icon n="${n}"></ise-icon></div>`).join(''));

/* ---------- scroll bar: segment lengths as "trough thumb trough" ---------- */
define('scroll-bar', `:host{display:flex;flex:none}:host([v]){flex-direction:column;width:15px}:host([h]){height:15px}
 .k{flex:none;width:15px;height:15px;border:1px solid #8c8782;border-radius:3px;background:linear-gradient(90deg,#fff,#e6e2de);display:flex;align-items:center;justify-content:center}
 .k svg{display:block}.t{background:#d6cdc5;border:0 solid #9a948e}:host([v]) .t{border-width:0 1px}:host([h]) .t{border-width:1px 0}
 .m{border:1px solid #8c8782;background:linear-gradient(90deg,#fcfbfa,#e6e2de);display:flex;align-items:center;justify-content:center}:host([h]) .m{background:linear-gradient(#fcfbfa,#e6e2de)}
 .m i{width:8px;height:10px;background:repeating-linear-gradient(#c0bcb8 0 1px,#fff 1px 2px,transparent 2px 4px)}:host([h]) .m i{height:8px;background:repeating-linear-gradient(90deg,#c0bcb8 0 1px,#fff 1px 2px,transparent 2px 3px)}`,
 el=>{const v=el.hasAttribute('v'),[a,b,c]=A(el,'s').split(' ');const s=(n,k)=>`<div class="${k}" style="flex:${n} 1 0;${n==='0'?'display:none':''}">${k==='m'?'<i></i>':''}</div>`;
 const ar=p=>`<div class="k"><svg width="7" height="7"><path d="${p}" fill="#000"/></svg></div>`;
 return (v?ar('M0 5.500h7l-3.500-4z'):ar('M5.500 0v7l-4-3.500z'))+s(a,'t')+s(b,'m')+s(c,'t')+(v?ar('M0 1.500h7l-3.500 4z'):ar('M1.500 0v7l4-3.500z'))});

/* ---------- trees and tables ---------- */
const CELL={'t':'<path d="M10.500 0v18M11 9.500h8"/>','l':'<path d="M10.500 0v9M11 9.500h8"/>','|':'<path d="M10.500 0v18"/>','.':'',
 '+':'<path d="M10.500 0v18M15 9.500h5"/>','-':'<path d="M10.500 0v18M15 9.500h5"/>','s':'<path d="M10.500 0v5M15 9.500h5"/>'};
define('tree-row', `:host{display:flex;height:18px;flex:none;align-items:center;overflow:hidden}:host([sel]){background:#918c7e;color:#f4f2ee}:host([alt]){background:#e8e7e3}
 svg{width:20px;height:18px;flex:none;fill:none;stroke:#a09c98}svg path{stroke-dasharray:1 1}svg .x{stroke-dasharray:none}.i{display:flex;flex:none;padding-left:3px}fit-text{line-height:17px;padding-bottom:1px}`,
 el=>{const sel=el.hasAttribute('sel');return [...A(el,'c')].map(c=>`<svg>${CELL[c]}${'+-s'.includes(c)?`<rect x="6.500" y="5.500" width="8" height="8" fill="${sel?'#7c786c':'#fff'}" stroke="${sel?'#7c786c':'#848484'}"/><path class="x" stroke="#000" d="M8 9.500h5${c==='+'?'M10.500 7v5':''}"/>`:''}</svg>`).join('')+
 `<div class="i" style="width:${A(el,'iw','41')}px">${A(el,'i').split(' ').map(n=>`<ise-icon n="${n}"></ise-icon>`).join('')}</div>${T(A(el,'t'),A(el,'w'))}`});
define('list-frame', `:host{display:flex;flex-direction:column;border:1px solid #aaa5a0;padding:1px;position:relative;background:#efebe7}
 .w{display:flex;flex:1;min-height:0}.c{flex:1;display:flex;flex-direction:column;min-width:0}.h{height:26px;flex:none;border-bottom:1px solid #a8a098;background:linear-gradient(#efebe7 80%,#e6dfd8);display:flex;align-items:center;padding-left:4px;box-shadow:0 -1px #e4ddd6 inset}
 .h b{font-weight:400;flex:1}.h svg{margin-right:8px}.d{width:2px;height:20px;border-left:1px solid #c4bfba;background:#fff}.r{flex:1;min-height:0;overflow:hidden;background:#fff;display:flex;flex-direction:column}`,
 el=>`<div class="w"><div class="c"><div class="h">${T(A(el,'t'),A(el,'w'))}<b></b>${el.hasAttribute('arrow')?'<svg width="10" height="7"><path d="M1 1.500l4 3.500 4-3.500" stroke="#000" stroke-width="2.200" fill="none"/></svg>':''}${el.hasAttribute('div')?'<div class="d"></div>':''}</div><div class="r"><slot></slot></div></div><slot name="sb"></slot></div><slot name="hb"></slot>`);
define('prop-row', `:host{display:grid;grid-template-columns:368px 1fr;height:18px;flex:none;padding-left:3px;line-height:17px}:host([alt]){background:#e8e7e3}`,
 el=>{const v=A(el,'v').split(',');return T(v[0],v[1])+T(v[2],v[3])});
define('prop-table', `:host{display:flex;border:1px solid #aaa5a0;padding:1px}.c{flex:1;display:flex;flex-direction:column;background:#fff;overflow:hidden}
 .h{height:26px;flex:none;border-bottom:1px solid #a8a098;box-shadow:0 -1px #e4ddd6 inset;background:#efebe7;display:flex;align-items:center;padding-left:4px}.s{flex:1}.h svg{margin-right:8px}.d{width:2px;height:20px;border-left:1px solid #c4bfba;background:#fff}.n{width:362px;display:flex;align-items:center}.v{padding-left:4px;flex:1}`,
 `<div class="c"><div class="h"><div class="n">${T('Name',38)}<div class="s"></div><svg width="10" height="7"><path d="M1 5.500l4-3.500 4 3.500" stroke="#000" stroke-width="2.200" fill="none"/></svg></div><div class="d"></div><div class="v">${T('Value',35)}</div><div class="d"></div></div>
 <prop-row v="Verilog Model,87,FDC,26"></prop-row><prop-row alt v="VHDL Model,78,FDC,26"></prop-row><prop-row v="Type,29,fdc,19"></prop-row></div><scroll-bar v s="0 27 16"></scroll-bar>`);

define('split-grip', `:host{flex:none}:host([h]){width:40px;height:4px;background:repeating-linear-gradient(90deg,#b4b0ac 0 1px,#fff 1px 2px)}:host([v]){width:4px;height:40px;background:repeating-linear-gradient(#b4b0ac 0 1px,#fff 1px 2px)}`, '');

/* ---------- left side ---------- */
define('design-panel', `:host{height:330px;display:flex;flex-direction:column;border-bottom:1px solid #c0bbb6}
 .b{display:grid;grid-template-columns:28px 247px;flex:1;min-height:0}.r{display:flex;flex-direction:column;border-left:1px solid #c0bbb6;min-height:0}
 .v{height:24px;display:flex;align-items:center;padding-left:4px;padding-bottom:1px;flex:none;width:246px}.o{width:12px;height:12px;border:1px solid #8c8782;border-radius:50%;background:#fff;flex:none;position:relative;display:flex;align-items:center;justify-content:center}.o b{width:6px;height:6px;border-radius:50%;background:#333}
 .c{flex:none}list-frame{flex:1;min-height:0}dock-title{margin-right:1px}tool-column{border-left-color:#fff}`,
 `<dock-title up t="Design" w="44"></dock-title><div class="b"><tool-column i="newsrc addsrc addcopy | hierg | remsrc | chipchk docchk | columns"></tool-column><div class="r">
 <div class="v">${T('View',30)}<div class="o" style="margin:0 6px 0 1px"><b></b></div><ise-icon n="chipsync"></ise-icon><div class="c" style="width:81px;margin-left:4px">${T('Implementat',81)}</div><div class="o" style="margin:0 6px 0 4px"></div><ise-icon n="isim"></ise-icon><div class="c" style="width:47px;margin-left:4px">${T('Simulat',47)}</div></div>
 <list-frame t="Hierarchy" w="62"><tree-row c="t" i="proj" iw="25" t="SIPO" w="29.500"></tree-row><tree-row c="s" i="chip" iw="25" t="xc3s50-5pq208" w="98.500"></tree-row><tree-row sel c=".+" i="vhd hierc" t="SIPO_rtl - Behavioral (/ho" w="161"></tree-row>
 <scroll-bar h slot="hb" s="0 95 117"></scroll-bar></list-frame></div></div>`);
define('process-panel', `:host{display:grid;grid-template-columns:28px 247px;height:265px;border-bottom:1px solid #c0bbb6}
 .r{border-left:1px solid #c0bbb6;display:flex;flex-direction:column;min-height:0}.n{height:32px;display:flex;align-items:center;padding-left:6px;gap:10px;flex:none}list-frame{flex:1;min-height:0}`,
 `<tool-column i="play | run1 run2 | run3 | columns"></tool-column><div class="r"><div class="n"><ise-icon n="sync"></ise-icon>${T('No Processes Running',142)}</div>
 <list-frame div t="Processes: SIPO_rtl - Behavioral" w="206"><scroll-bar v slot="sb" s="0 183 17"></scroll-bar>
 ${[['t','sigma','Design Summary/Repo...',160.5],['+','tools','Design Utilities',99.500],['+','tools','User Constraints',107.500],['-','sync warn','Synthesize - XST',109],['|t','rtl','View RTL Schematic',131,'sel'],['|t','tech','View Technology Sc...',140.500],['|t','sync ok','Check Syntax',88],['|l','sync','Generate Post-Synt...',138.500],['+','sync','Implement Design',120],['t','sync','Generate Programmin...',157],['+','device','Configure Target Device',155],['t','analyze','Analyze Design Usi...',140]].map(r=>`<tree-row c="${r[0]}" i="${r[1]}" t="${r[2]}" w="${r[3]}" ${r[4]||''}></tree-row>`).join('')}</list-frame></div>`);
define('left-side', `:host{display:grid;grid-template-columns:276px 5px;height:600px}.g{height:5px;display:flex;align-items:flex-start;justify-content:center;padding:0 0 0 1px}.v{display:flex;padding-top:279px}`,
 `<div><design-panel></design-panel><div class="g"><split-grip h></split-grip></div><process-panel></process-panel></div><div class="v"><split-grip v></split-grip></div>`);

/* ---------- schematic ---------- */
const st=(x,y,w,s,c,t)=>`<text x="${x}" y="${y}" font-size="${s}" fill="${c}" textLength="${w}" lengthAdjust="spacingAndGlyphs">${t}</text>`;
const ln=(d,c,w=1)=>`<path d="${d}" stroke="${c}" stroke-width="${w}" fill="none"/>`;
const B='#0000ff',R='#ff0000',O='#808000',RT='#e00018',BT='#0000ff';
define('schematic-view', `:host{background:#fff;border:1px solid #a8a39e;border-width:1px 2px 1px 2px;border-left-color:#b8b3ae;border-right-color:#d8d3ce;overflow:hidden;margin-bottom:1px}svg{display:block;font-family:"Liberation Sans",sans-serif;shape-rendering:crispEdges}`,
 `<svg width="1217" height="570" viewBox="381 121 1217 570">
 ${ln('M570.5 178.5h840v455h-840z','#808080')}${ln('M625.500 237.500h722v338h-722z',B)}
 <path fill="${B}" d="M625 237h16l-16 16zM1348 237v16l-16-16zM625 576v-16l16 16zM1348 576h-16l16-16zM779 294h17l-17 17zM1200 294v16l-17-16zM779 560v-17l16 17zM1200 560h-16l16-16z"/>
 ${ln('M780 295h419v264h-419z',B,2)}
 ${[380,442,489].map(y=>ln(`M594 ${y+.5}h62M780 ${y+.5}h31`,B)+ln(`M656 ${y+.5}h92M811 ${y+.5}h85`,O)+ln(`M748 ${y}h32`,B,2)+ln(`M896 ${y+.5}h31`,R)).join('')}
 ${ln('M927.500 349.500h125v125h-125zM1051 380.500h32M896 489.500h93.500v-16',R)}<path d="M928 435l7.500 7.500-7.500 8" stroke="${R}" fill="none"/>
 ${ln('M1083 380.500h86',O)}${ln('M1169 380.500h30',B)}${ln('M1199 380h31M1200 419h31',B,2)}${ln('M1230 380h85',O,2)}${ln('M1314 380h65',B,4)}
 <g style="shape-rendering:auto">
 ${st(923,226,124,27,BT,'SIPO_rtl:1')}${st(925,285,127.500,27,BT,'D_FF_rtl:1')}${st(934,603,103,27,BT,'SIPO_rtl')}
 ${st(973.500,336,32,23.500,RT,'fdc')}${st(963.500,518,51.500,23.500,RT,'temp')}
 ${st(586.500,378,23.500,12,BT,'data')}${st(583,440,26,12,BT,'clock')}${st(595.500,487,14,12,BT,'rst')}
 ${st(758,378,6.500,12,BT,'d')}${st(750,440,15,12,BT,'clk')}${st(739,487,26,12,BT,'reset')}
 ${st(1214,378,6.500,12,BT,'q')}${st(1214,417,14,12,BT,'qb')}${st(1362,378,36.500,12,BT,'qs(3:0)')}
 ${st(903.500,378,9,12.500,RT,'D')}${st(1066.500,378,10,12.500,RT,'Q')}${st(903.500,440,9.500,12.500,RT,'C')}${st(919.500,487,24.500,12.500,RT,'CLR')}</g></svg>`);

/* ---------- tabs ---------- */
define('tab-item', `:host{display:flex;flex:none;height:var(--th,24px);border-right:1px solid #8c8782;border-bottom:2px solid #8c8782;box-shadow:inset 1px 0 #fff,inset 0 -1px #fff;border-radius:0 0 3px 3px;background:linear-gradient(#c8c3be,#ebe7e3);align-items:center;line-height:20px}
 :host([on]){background:linear-gradient(#e9e5e1,#f6f3f0);height:calc(var(--th,24px) + 2px);border-bottom:3px solid #4c7ca8;padding-top:1px}`, '<slot></slot>');
const tab=(w,icon,il,t,tl,tw,close,on='')=>`<tab-item ${on} style="width:${w}px"><ise-icon n="${icon}" style="margin-left:${il}px"></ise-icon><fit-text w="${tw}" style="margin-left:${tl}px">${t}</fit-text>${close?`<ise-icon n="close" style="width:14px;height:14px;margin-left:${close-1}px"></ise-icon>`:''}</tab-item>`;
define('tab-strip', `:host{display:flex;align-items:flex-start;border-top:1px solid #8c8782}`, '<slot></slot>');

define('center-side', `:host{display:flex;flex-direction:column;height:600px}.a{display:grid;grid-template-columns:28px 1fr;height:573px}tab-strip{height:27px;margin-left:1px}`,
 `<div class="a"><tool-column i="cursor net | stars | tright tleft | popwin delbox chipb chipg | gateg label | up back fwd clock | cols marker"></tool-column><schematic-view></schematic-view></div>
 <tab-strip>${tab(194,'doc',5,'SIPO_rtl.vhd',34,79,36)}${tab(275,'sigma',6,'Design Summary (Synthesized)',11,204.5,13)}${tab(195,'doc',6,'D_FF_rtl.vhd',34,79.5,35)}${tab(195,'doc',6,'SIPO_test.vhd',28,90,30)}${tab(194,'rtl',5,'SIPO_rtl (RTL3)',26,96,27,'on')}</tab-strip>`);

/* ---------- bottom ---------- */
define('category-panel', `:host{display:flex;flex-direction:column;height:127px}.t{display:grid;grid-template-columns:762px 1fr;height:25px;font-weight:700;line-height:19px}.t div{display:flex;justify-content:center}.t div+div{padding-left:7px}
 .l{display:grid;grid-template-columns:248px 249px 247px 4px 754px;column-gap:5px;height:77px;padding-left:4px}.g{padding-top:8px}.l list-frame,prop-table{height:77px}.l list-frame:nth-child(-n+2){margin-right:1px}`,
 `<dock-title t="View by Category" w="113"></dock-title><div class="t"><div>${T('Design Objects of Top Level Block',247)}</div><div>${T('Properties of Instance: temp',212)}</div></div>
 <div class="l"><list-frame arrow div t="Instances" w="60.500"><scroll-bar v slot="sb" s="16 28 0"></scroll-bar><tree-row alt style="padding-left:40px" c="t" iw="25" i="redhier" t="d3" w="15.500"></tree-row><tree-row sel style="padding-left:40px" c="l" iw="25" i="gate" t="temp" w="34"></tree-row></list-frame>
 <list-frame arrow div t="Pins" w="25.500"><scroll-bar v slot="sb" s="8 28 8"></scroll-bar><tree-row style="padding-left:20px" c="t" iw="25" i="pin" t="data" w="28"></tree-row><tree-row alt style="padding-left:20px" c="+" iw="25" i="redhier" t="d3,d2,d1,d0" w="76"></tree-row><tree-row style="padding-left:20px" c="+" iw="25" i="bus" t="qs(3:0)" w="44"></tree-row></list-frame>
 <list-frame arrow div t="Signals" w="46.500"><scroll-bar v slot="sb" s="8 28 8"></scroll-bar><tree-row style="padding-left:20px" c="t" iw="25" i="sig" t="data" w="28"></tree-row><tree-row alt style="padding-left:20px" c="+" iw="25" i="redhier" t="d3,d2,d1,d0" w="76"></tree-row><tree-row style="padding-left:20px" c="+" iw="25" i="sig" t="qs(3:0)" w="44"></tree-row></list-frame>
 <div class="g"><split-grip v></split-grip></div><prop-table></prop-table></div>`);

define('ise-window', `:host{display:flex;flex-direction:column;background:#efebe7;min-width:0}.tb{display:flex;height:30px;border-bottom:1px solid #aea9a4}
 .mid{display:grid;grid-template-columns:281px 1249px;height:600px}.sp{height:5px;display:flex;justify-content:center;align-items:flex-start;padding:1px 2px 0 0}.bt{height:26px;--th:22px}.st{display:flex;justify-content:flex-end;padding:2px 5px 0 0;line-height:18px}`,
 `<title-bar></title-bar><menu-bar></menu-bar><div class="tb">
 <tool-group style="width:162px" i="newdoc open save saveall | print"></tool-group><tool-group style="width:185px" i="cut copy paste del | undo more"></tool-group><tool-group style="width:220px" i="zin zout zfit zsel zbox refresh | hammer"></tool-group><tool-group style="width:125px" i="cascade tileh tilev winback"></tool-group><tool-group style="width:67px" i="wrench help"></tool-group><tool-group style="width:96px" i="play sigma scope"></tool-group><tool-group style="flex:1" i="bulb"></tool-group></div>
 <div class="mid"><left-side></left-side><center-side></center-side></div><div class="sp"><split-grip h></split-grip></div><category-panel></category-panel>
 <tab-strip class="bt">${tab(93,'console',6,'Console',10.5,52,0)}${tab(82,'err',6,'Errors',11,37.500,0)}${tab(102,'warn',5,'Warnings',11,59,0)}${tab(168,'find',5,'Find in Files Results',11,125.500,0)}${tab(156,'grid',5,'View by Category',11,114,0,'on')}</tab-strip><div class="st">${T('[-204,220]',67)}</div>`);
define('ise-desktop', `:host{width:1600px;height:900px;overflow:hidden}.g{display:grid;grid-template-columns:70px 1530px;height:873px}`,
 `<shell-bar></shell-bar><div class="g"><app-dock></app-dock><ise-window></ise-window></div>`);
fits.forEach(f => f.fit());
</script>
</body>
</html>
